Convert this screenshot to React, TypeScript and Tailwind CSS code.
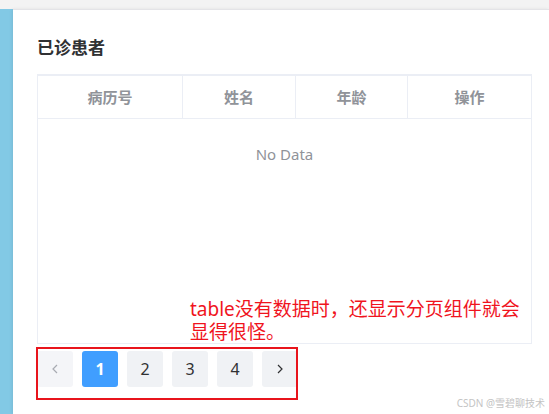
export default function App() {
  const columns = [
    { label: "病历号", w: "w-[145px]" },
    { label: "姓名", w: "w-[113px]" },
    { label: "年龄", w: "w-[112px]" },
    { label: "操作", w: "flex-1" },
  ];

  return (
    <div
      className="relative h-[414px] w-[549px] overflow-hidden bg-[#f3f3f3] pt-[9px]"
      style={{ fontFamily: '"Noto Sans", "Noto Sans CJK SC", sans-serif' }}
    >
      <div className="flex h-full">
        <div className="w-[13px] bg-[#82c9e5]" />
        <div className="flex-1 border-t border-[#e4e4e7] bg-white pl-[24px] shadow-[-1px_0_3px_rgba(0,0,0,0.08)]">
          <h2 className="mt-[27px] text-[17px] font-bold leading-[22px] text-[#303133]">已诊患者</h2>

          {/* table */}
          <div className="mt-[15px] w-[495px] border-x border-b border-t-2 border-[#ebeef5]">
            <div className="flex h-[43px] border-b border-[#ebeef5]">
              {columns.map((c, i) => (
                <div
                  key={c.label}
                  className={`${c.w} flex items-center justify-center text-[15px] font-bold text-[#909399] ${
                    i < columns.length - 1 ? "border-r border-[#ebeef5]" : ""
                  }`}
                >
                  {c.label}
                </div>
              ))}
            </div>
            <div className="h-[224px]">
              <div className="pt-[24px] text-center text-[15px] leading-[22px] text-[#909399]">No Data</div>
            </div>
          </div>

          {/* pagination */}
          <div className="mt-[7px] flex gap-[9px]">
            <button className="flex h-[36px] w-[36px] items-center justify-center rounded-[3px] bg-[#f4f5f8] text-[#a8abb2]">
              <svg width="12" height="12" viewBox="0 0 12 12" fill="none" stroke="currentColor" strokeWidth="1.2">
                <path d="M8 2 L4 6 L8 10" />
              </svg>
            </button>
            <button className="h-[36px] w-[36px] rounded-[3px] bg-[#409eff] text-[16px] font-bold text-white">1</button>
            {["2", "3", "4"].map((n) => (
              <button key={n} className="h-[36px] w-[36px] rounded-[3px] bg-[#f0f2f5] text-[16px] text-[#303133]">
                {n}
              </button>
            ))}
            <button className="flex h-[36px] w-[36px] items-center justify-center rounded-[3px] bg-[#f0f2f5] text-[#303133]">
              <svg width="12" height="12" viewBox="0 0 12 12" fill="none" stroke="currentColor" strokeWidth="1.2">
                <path d="M4 2 L8 6 L4 10" />
              </svg>
            </button>
          </div>
        </div>
      </div>

      {/* annotation */}
      <div className="absolute left-[190px] top-[298px] text-[19px] leading-[23px] text-[#f0141e]">
        table没有数据时，还显示分页组件就会
        <br />
        显得很怪。
      </div>
      <div className="absolute left-[36px] top-[347px] h-[53px] w-[262px] border-2 border-[#e8141c]" />

      <div className="absolute right-[4px] top-[396px] text-[10px] text-[#c4c4c4]">CSDN @雪碧聊技术</div>
    </div>
  );
}
